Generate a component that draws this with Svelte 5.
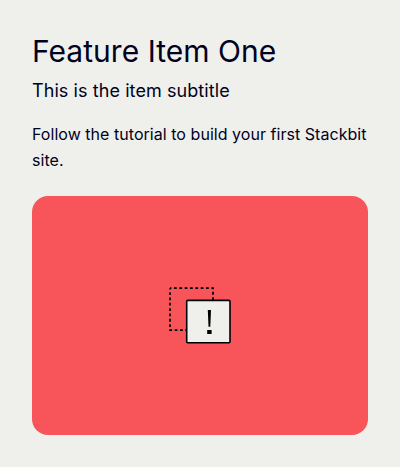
<script>
  const item = {
    title: 'Feature Item One',
    subtitle: 'This is the item subtitle',
    text: 'Follow the tutorial to build your first Stackbit site.'
  };
</script>

<article class="feature">
  <h3>{item.title}</h3>
  <p class="subtitle">{item.subtitle}</p>
  <p class="text">{item.text}</p>
  <div class="media">
    <svg width="64" height="58" viewBox="168 286 64 58" aria-hidden="true">
      <path d="M170 288.2H213V300M170 288.2V330.2H186" fill="none" stroke="#000" stroke-width="1.7" stroke-dasharray="2.8 2.54" stroke-dashoffset="1.4" />
      <rect x="186.7" y="300.4" width="43.3" height="42.3" rx="1" fill="#eff0ec" stroke="#000" stroke-width="1.6" />
      <path d="M207.8 310h3.2l-.7 16.8h-1.8zM207.2 330.1h4.4v3.8h-4.4z" fill="#000" />
    </svg>
  </div>
</article>

<style>
  :global(body) {
    margin: 0;
    background: #eff0eb;
  }
  .feature {
    box-sizing: border-box;
    height: 467px;
    padding: 32px;
    font-family: Inter, sans-serif;
    color: #00011e;
    display: flex;
    flex-direction: column;
  }
  h3, p {
    margin: 0;
    font-weight: 400;
  }
  h3 {
    font-size: 30px;
    line-height: 38px;
    letter-spacing: 0.03px;
  }
  .subtitle {
    margin-top: 7px;
    font-size: 18px;
    line-height: 28px;
    letter-spacing: 0.08px;
  }
  .text {
    margin-top: 16px;
    font-size: 16px;
    line-height: 26px;
    letter-spacing: 0.04px;
  }
  .media {
    display: flex;
    align-items: center;
    justify-content: center;
    box-sizing: border-box;
    height: 238.6px;
    margin-top: 23px;
    padding-bottom: 1.6px;
    border-radius: 16px;
    background: #f75559;
  }
  svg {
    display: block;
  }
</style>
